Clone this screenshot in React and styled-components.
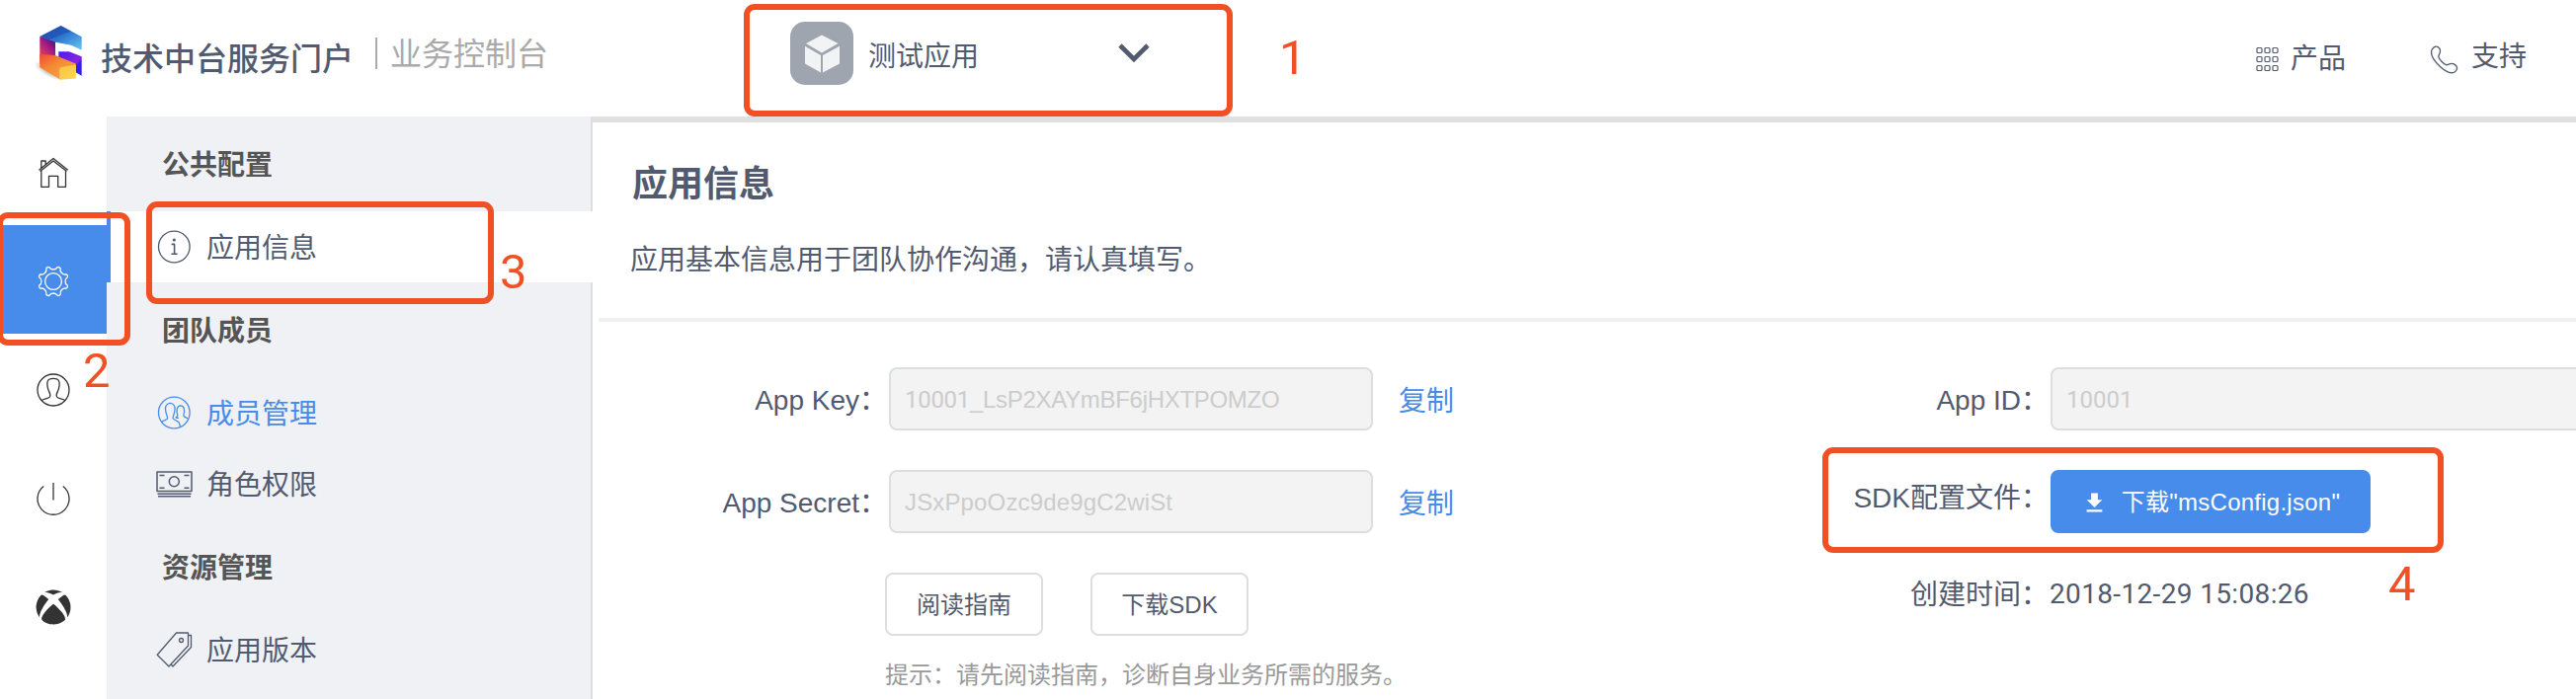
import React from 'react';
import styled, { createGlobalStyle, css } from 'styled-components';
import { FaXbox } from 'react-icons/fa';
import { MdFileDownload } from 'react-icons/md';

const ink = '#515a6e';
const blue = '#478cea';
const red = '#f05024';
const line = '#dcdee2';

const GlobalStyle = createGlobalStyle`
  * { box-sizing: border-box; }
  body {
    margin: 0;
    background: #fff;
    color: ${ink};
    font-family: "Liberation Sans", "Noto Sans CJK SC", sans-serif;
    font-size: 28px;
    line-height: 40px;
  }
`;

const Page = styled.div`
  position: relative;
  width: 2608px;
  height: 708px;
  overflow: hidden;
  display: flex;
  flex-direction: column;
`;

const Header = styled.header`
  height: 118px;
  flex: none;
  display: flex;
  align-items: flex-start;
  padding: 22px 50px 0 36px;
`;

const Logo = styled.svg`
  width: 50px;
  height: 64px;
  flex: none;
`;

const Brand = styled.div`
  margin: 18px 0 0 16px;
  width: 278px;
  font-size: 32px;
  font-weight: 500;
  white-space: nowrap;
`;

const SubBrand = styled.div`
  margin-top: 16px;
  height: 32px;
  padding-left: 13px;
  border-left: 2px solid #aaa;
  font-size: 32px;
  line-height: 34px;
  font-weight: 400;
  color: #aaa;
  width: 420px;
`;

const AppPicker = styled.div`
  display: flex;
  align-items: flex-start;
  width: 364px;
`;

const AppIcon = styled.svg`
  width: 64px;
  height: 64px;
  margin-right: 15px;
`;

const AppName = styled.span`
  margin-top: 16px;
  flex: 1;
`;

const Chevron = styled.svg`
  width: 32px;
  height: 22px;
  margin-top: 21px;
`;

const HeaderLinks = styled.nav`
  margin-left: auto;
  display: flex;
  gap: 85px;
`;

const HeaderLink = styled.a`
  display: flex;
  gap: ${(p) => p.$gap}px;
  padding-top: ${(p) => p.$top}px;

  svg { margin-top: ${(p) => p.$iconTop}px; }
`;

const Body = styled.div`
  flex: 1;
  display: flex;
  min-height: 0;
`;

const Rail = styled.nav`
  width: 108px;
  flex: none;
`;

const RailItem = styled.div`
  height: 110px;
  display: flex;
  align-items: center;
  justify-content: center;
  padding-top: 3px;
  color: ${(p) => (p.$active ? '#fff' : '#333')};
  background: ${(p) => (p.$active ? blue : 'transparent')};
`;

const Sidebar = styled.aside`
  width: 492px;
  flex: none;
  background: #f0f1f5;
  box-shadow: inset -2px 0 0 ${line};
`;

const GroupTitle = styled.h3`
  margin: 0;
  height: 96px;
  padding-left: 56px;
  line-height: 99px;
  font-size: 28px;
  font-weight: 700;
  color: #555;
`;

const MenuItem = styled.div`
  height: 72px;
  display: flex;
  align-items: center;
  padding-left: 50px;
  line-height: 72px;
  color: ${(p) => (p.$tone === 'link' ? blue : ink)};
  ${(p) => p.$active && css`
    background: #fff;
    border-left: 4px solid ${blue};
    padding-left: 46px;
  `}

  svg { margin-right: 13px; }
`;

const MenuText = styled.span`
  padding-top: 4px;
`;

const Main = styled.main`
  flex: 1;
  min-width: 0;
  border-top: 6px solid #e0e0e0;
`;

const Intro = styled.section`
  height: 202px;
  margin-left: 6px;
  padding: 39px 0 0 32px;
  border-bottom: 4px solid #f0f0f0;
`;

const Title = styled.h1`
  margin: 0;
  padding-left: 2px;
  font-size: 36px;
  line-height: 48px;
  font-weight: 700;
`;

const Lead = styled.p`
  margin: 33px 0 0;
`;

const Columns = styled.section`
  display: grid;
  grid-template-columns: 1176px 832px;
  padding-top: 46px;
`;

const Row = styled.div`
  display: flex;
  align-items: center;
  height: 64px;
  margin-bottom: ${(p) => p.$gap ?? 40}px;
`;

const Label = styled.label`
  width: 300px;
  flex: none;
  padding: ${(p) => p.$top ?? 3}px 2px ${(p) => p.$bottom ?? 0}px 0;
  text-align: right;
  white-space: nowrap;
`;

const Field = styled.div`
  width: ${(p) => p.$width}px;
  height: 64px;
  flex: none;
  padding-left: 14px;
  border: 2px solid ${line};
  border-radius: 8px;
  background: #f3f3f3;
  color: #ccc;
  font-size: 24px;
  line-height: 62px;
  letter-spacing: ${(p) => p.$spacing ?? 0}px;
`;

const Digits = styled.span`
  font-family: Roboto, "Liberation Sans", sans-serif;
`;

const Stamp = styled.span`
  padding-top: 2px;
  margin-left: -1px;
  font-family: Roboto, "Liberation Sans", sans-serif;
  letter-spacing: 0.35px;
`;

const CopyLink = styled.a`
  margin-left: 26px;
  padding-top: 5px;
  color: ${blue};
`;

const Actions = styled.div`
  display: flex;
  gap: 48px;
  margin-left: 296px;
`;

const Button = styled.button`
  width: ${(p) => (p.$primary ? 324 : 160)}px;
  height: 64px;
  padding: 2px 0 0;
  display: flex;
  align-items: center;
  justify-content: center;
  gap: 14px;
  border: 2px solid ${(p) => (p.$primary ? blue : line)};
  border-radius: 8px;
  background: ${(p) => (p.$primary ? blue : '#fff')};
  color: ${(p) => (p.$primary ? '#fff' : ink)};
  font: inherit;
  font-size: 24px;
  letter-spacing: ${(p) => (p.$primary ? 0.25 : 0)}px;
  white-space: nowrap;
`;

const Hint = styled.p`
  margin: 20px 0 0 296px;
  font-size: 24px;
  color: #999;
`;

const Mark = styled.div`
  position: absolute;
  left: ${(p) => p.$x}px;
  top: ${(p) => p.$y}px;
  width: ${(p) => p.$w}px;
  height: ${(p) => p.$h}px;
  border: 6px solid ${red};
  border-radius: 11px;
`;

const MarkNumber = styled.span`
  position: absolute;
  left: ${(p) => p.$x}px;
  top: ${(p) => p.$y}px;
  font-family: Roboto, sans-serif;
  font-size: 49px;
  line-height: 50px;
  color: ${red};
`;

const Outline = ({ size = 34, width = size, children, weight = 1.3 }) => (
  <svg width={width} height={size} viewBox={`0 0 ${width} ${size}`} fill="none"
    stroke="currentColor" strokeWidth={weight} strokeLinejoin="round">
    {children}
  </svg>
);

const HomeIcon = () => (
  <Outline size={32}>
    <path d="M1.5 13.2 16 1.5 30.7 13.2M2.6 14.6 16 4 29.5 14.6M3.8 14V30.3H11.5V19.3H20.7V30.3H28.5V14M3.8 11V4H8.2V7.6" />
  </Outline>
);

const polar = (r, deg) => {
  const a = (deg * Math.PI) / 180;
  return `${(17 + r * Math.cos(a)).toFixed(2)} ${(17 + r * Math.sin(a)).toFixed(2)}`;
};

const gearPath = Array.from({ length: 8 }, (_, i) => {
  const a = 22.5 + 45 * i;
  return `${i ? 'L' : 'M'}${polar(15, a - 6)}Q${polar(16.2, a)} ${polar(15, a + 6)}A5 5 0 0 0 ${polar(15, a + 39)}`;
}).join('') + 'Z';

const GearIcon = () => (
  <Outline>
    <path d={gearPath} />
    <circle cx="17" cy="17" r="8.4" />
  </Outline>
);

const PersonIcon = () => (
  <Outline>
    <circle cx="17" cy="17" r="16" />
    <path d="M5 27.8C7.5 25.8 12 26 13.4 24 14.2 22.7 13.6 20.4 12.7 18.6 11 15.5 10.3 10 11.3 8 12.8 4.4 21.2 4.4 22.7 8 23.7 10 23 15.5 21.3 18.6 20.4 20.4 19.8 22.7 20.6 24 22 26 26.5 25.8 29 27.8" />
  </Outline>
);

const PowerIcon = () => (
  <Outline>
    <path d="M17 1V18.5M7.2 4.6A16 16 0 1 0 26.8 4.6" />
  </Outline>
);

const InfoIcon = () => (
  <Outline width={38}>
    <circle cx="18.3" cy="17" r="15.8" />
    <circle cx="18.3" cy="10" r="1.6" fill="currentColor" stroke="none" />
    <path d="M15.6 14.4H18.6V24M15.4 24.3H21.6" strokeWidth="1.6" />
  </Outline>
);

const TeamIcon = () => (
  <Outline width={38}>
    <g transform="translate(1.3 0)">
      <circle cx="17" cy="17" r="15.8" />
      <path d="M4.3 26.4C6.5 24.4 9.5 24.6 10.3 22.8 10.8 21 8.2 18.6 8.2 13 8 5.6 18 5.6 17.8 13 17.8 18.6 15.3 20.6 15.8 22.6 16.5 24.6 20.5 24.8 22 27.2 22.8 28.6 23 29.6 23.2 31.4" />
      <path d="M18.4 21.6C20.6 21.3 20.8 20.2 20.2 18.6 19.4 15.6 19.3 9.8 23.5 9.8 27.8 9.8 27.6 15.6 26.8 18.4 26.2 20.4 26.6 21.3 30.8 22.8M18.4 21.6C20 22.6 21 22.4 21.5 22.2" />
    </g>
  </Outline>
);

const MoneyIcon = () => (
  <Outline width={38} size={28} weight={1.5}>
    <path d="M1 2H36V21.5H1ZM1.5 24.3H35.5M2 26.8H35M3.5 5.5H8.5M28.5 5.5H33.5M3.5 18.3H8.5M28.5 18.3H33.5" />
    <circle cx="18.3" cy="11.8" r="5" />
  </Outline>
);

const TagIcon = () => (
  <Outline width={38} size={36}>
    <path d="M20.5 1H32.5V14L13 35 1.2 23.2ZM32.8 3.5H35.5V15.5L17 35L15.2 33" />
    <circle cx="25.5" cy="8.5" r="2" />
  </Outline>
);

const GridIcon = () => (
  <Outline width={24} size={26} weight={1.2}>
    {[1, 9, 17].map((x) => [1.5, 10.5, 19.5].map((y) => (
      <rect key={`${x}-${y}`} x={x} y={y} width="5" height="5" rx="1" />
    )))}
  </Outline>
);

const PhoneIcon = () => (
  <Outline width={29} size={29}>
    <path d="M2.4 3.8C4.5 .6 8 .3 9.8 3.2 12.3 7.3 8 9.6 9 12 9.8 14.5 14 19 16.5 19.7 18.8 20.2 20.5 17 24.5 18.8 28.3 20.6 28.5 24.6 25.5 26.7 21.5 29.4 16 26.5 10.5 21.5 3.5 15 -.2 8.5 2.4 3.8Z" />
  </Outline>
);

const BrandLogo = () => (
  <Logo viewBox="0 0 50 64">
    <defs>
      <linearGradient id="top" x1="0" y1="0" x2="1" y2="1">
        <stop offset="0" stopColor="#2350b4" />
        <stop offset=".5" stopColor="#2f78d0" />
        <stop offset="1" stopColor="#6cc8f2" />
      </linearGradient>
      <linearGradient id="left" x1=".9" y1="0" x2=".3" y2="1">
        <stop offset="0" stopColor="#3a1272" />
        <stop offset=".45" stopColor="#a51c86" />
        <stop offset="1" stopColor="#f4503b" />
      </linearGradient>
      <linearGradient id="base" x1="0" y1="0" x2=".8" y2="1">
        <stop offset="0" stopColor="#ee4a35" />
        <stop offset=".45" stopColor="#f58a35" />
        <stop offset="1" stopColor="#fba93a" />
      </linearGradient>
      <linearGradient id="front" x1="0" y1="0" x2="1" y2="1">
        <stop offset="0" stopColor="#f9c63f" />
        <stop offset="1" stopColor="#fbd653" />
      </linearGradient>
      <linearGradient id="right" x1="0" y1="0" x2="1" y2="1">
        <stop offset="0" stopColor="#4a1cf0" />
        <stop offset=".6" stopColor="#8a24e0" />
        <stop offset=".7" stopColor="#3c1cf0" />
        <stop offset="1" stopColor="#2f1fe8" />
      </linearGradient>
      <radialGradient id="shade">
        <stop offset="0" stopColor="#777" stopOpacity=".6" />
        <stop offset="1" stopColor="#777" stopOpacity="0" />
      </radialGradient>
    </defs>
    <ellipse cx="14" cy="50" rx="18" ry="6" transform="rotate(28 14 50)" fill="url(#shade)" />
    <path d="M4.3 15 20 19V37L4.3 43Z" fill="url(#left)" />
    <path d="M4.3 15 25.7 4 46.7 15.3V28.7L36 23.8 20 20.7Z" fill="url(#top)" />
    <path d="M4.3 15 25.7 4 36 9.5 14 18.2Z" fill="#1c43a8" opacity=".5" />
    <path d="M23.3 30.3H34L46.7 35.3V54.7L40.7 51.3V44L23.3 36Z" fill="url(#right)" />
    <path d="M4.3 33 20 34 40.7 42.5V46L24.7 48V58.4L4.3 46.3Z" fill="url(#base)" />
    <path d="M24.7 46.3 40.7 43.5V57.6L24.7 58.7Z" fill="url(#front)" />
  </Logo>
);

const railItems = [
  { id: 'home', icon: <HomeIcon /> },
  { id: 'settings', icon: <GearIcon />, active: true },
  { id: 'user', icon: <PersonIcon /> },
  { id: 'power', icon: <PowerIcon /> },
  { id: 'xbox', icon: <FaXbox size={36} /> },
];

const menu = [
  { title: '公共配置', items: [{ text: '应用信息', icon: <InfoIcon />, active: true }] },
  {
    title: '团队成员',
    items: [
      { text: '成员管理', icon: <TeamIcon />, tone: 'link' },
      { text: '角色权限', icon: <MoneyIcon /> },
    ],
  },
  { title: '资源管理', items: [{ text: '应用版本', icon: <TagIcon /> }] },
];

const marks = [
  { n: 1, box: [753, 4, 495, 114], at: [1295, 34] },
  { n: 2, box: [-3, 215, 135, 135], at: [84, 351] },
  { n: 3, box: [148, 204, 352, 104], at: [506, 251] },
  { n: 4, box: [1845, 453, 629, 107], at: [2418, 567] },
];

export default function App() {
  return (
    <>
      <GlobalStyle />
      <Page>
        <Header>
          <BrandLogo />
          <Brand>技术中台服务门户</Brand>
          <SubBrand>业务控制台</SubBrand>
          <AppPicker>
            <AppIcon viewBox="0 0 64 64">
              <rect width="64" height="64" rx="15" fill="#9ea5af" />
              <path d="M32 13.5 48.5 22 32 31.5 16 22ZM15 24.8 31 34V51.5L15 42.5ZM50 24.8 33 34V51.5L50 42.5Z" fill="#f2f3f5" />
            </AppIcon>
            <AppName>测试应用</AppName>
            <Chevron viewBox="0 0 32 22" fill="none" stroke={ink} strokeWidth="4.6">
              <path d="M2 3 16 17 30 3" />
            </Chevron>
          </AppPicker>
          <HeaderLinks>
            <HeaderLink $gap={11} $top={18} $iconTop={7}><GridIcon />产品</HeaderLink>
            <HeaderLink $gap={13} $top={16} $iconTop={8}><PhoneIcon />支持</HeaderLink>
          </HeaderLinks>
        </Header>
        <Body>
          <Rail>
            {railItems.map((r) => (
              <RailItem key={r.id} $active={r.active}>{r.icon}</RailItem>
            ))}
          </Rail>
          <Sidebar>
            {menu.map((group) => (
              <React.Fragment key={group.title}>
                <GroupTitle>{group.title}</GroupTitle>
                {group.items.map((item) => (
                  <MenuItem key={item.text} $active={item.active} $tone={item.tone}>
                    {item.icon}
                    <MenuText>{item.text}</MenuText>
                  </MenuItem>
                ))}
              </React.Fragment>
            ))}
          </Sidebar>
          <Main>
            <Intro>
              <Title>应用信息</Title>
              <Lead>应用基本信息用于团队协作沟通，请认真填写。</Lead>
            </Intro>
            <Columns>
              <div>
                <Row>
                  <Label>App Key：</Label>
                  <Field $width={490} $spacing={-0.3}><Digits>10001</Digits>_LsP2XAYmBF6jHXTPOMZO</Field>
                  <CopyLink>复制</CopyLink>
                </Row>
                <Row>
                  <Label>App Secret：</Label>
                  <Field $width={490} $spacing={0.15}>JSxPpoOzc9de9gC2wiSt</Field>
                  <CopyLink>复制</CopyLink>
                </Row>
                <Actions>
                  <Button>阅读指南</Button>
                  <Button>下载SDK</Button>
                </Actions>
                <Hint>提示：请先阅读指南，诊断自身业务所需的服务。</Hint>
              </div>
              <div>
                <Row>
                  <Label>App ID：</Label>
                  <Field $width={560}><Digits>10001</Digits></Field>
                </Row>
                <Row $gap={29}>
                  <Label $top={0} $bottom={7}>SDK配置文件：</Label>
                  <Button $primary>
                    <MdFileDownload size={27} />
                    下载"msConfig.json"
                  </Button>
                </Row>
                <Row>
                  <Label>创建时间：</Label>
                  <Stamp>2018-12-29 15:08:26</Stamp>
                </Row>
              </div>
            </Columns>
          </Main>
        </Body>
        {marks.map(({ n, box: [x, y, w, h], at }) => (
          <React.Fragment key={n}>
            <Mark $x={x} $y={y} $w={w} $h={h} />
            <MarkNumber $x={at[0]} $y={at[1]}>{n}</MarkNumber>
          </React.Fragment>
        ))}
      </Page>
    </>
  );
}
